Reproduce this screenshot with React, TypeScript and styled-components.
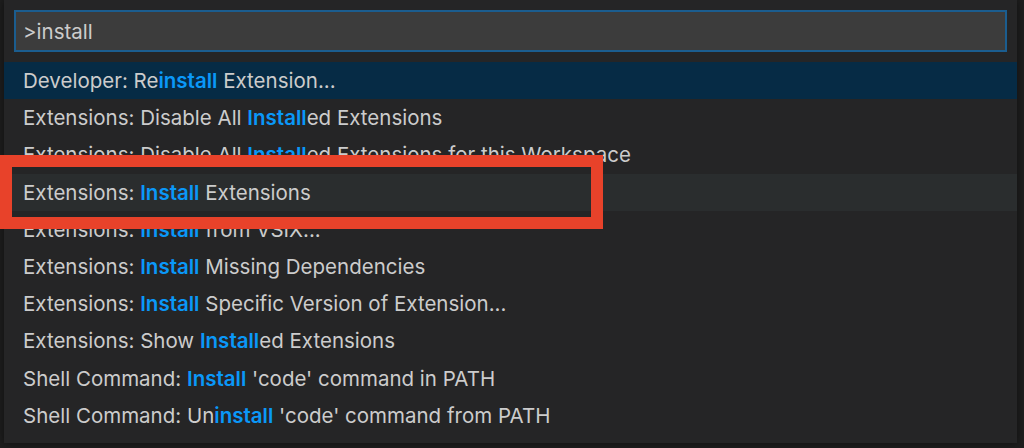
import React from "react";
import styled, { createGlobalStyle } from "styled-components";

const Global = createGlobalStyle`
  html, body { margin: 0; padding: 0; background: #1e1e1e; }
  body { width: 1024px; height: 448px; overflow: hidden; font-family: Inter, "Noto Sans", sans-serif; }
`;

const Page = styled.div`
  position: relative;
  display: flex;
  width: 1024px;
  height: 448px;
  padding-left: 4px;
  box-sizing: border-box;
  background: #1e1e1e;
`;

const Panel = styled.div`
  width: 1013px;
  height: 443px;
  box-sizing: border-box;
  background: #252526;
  padding: 10px 0 8px;
  display: flex;
  flex-direction: column;
  box-shadow: 0 0 8px rgba(0, 0, 0, 0.5);
`;

const InputBox = styled.div`
  margin: 0 10px;
  height: 42px;
  box-sizing: border-box;
  border: 2px solid #1b5d8f;
  background: #3c3c3c;
  display: flex;
  align-items: center;
  padding-left: 7px;
  color: #cccccc;
  font-size: 20.5px;
`;

const List = styled.div`
  margin-top: 10px;
  display: flex;
  flex-direction: column;
`;

const Row = styled.div<{ $state?: "selected" | "hover" }>`
  height: 37.2px;
  display: flex;
  align-items: center;
  padding-left: 19px;
  background: ${(p) =>
    p.$state === "selected" ? "#062b45" : p.$state === "hover" ? "#2a2d2e" : "transparent"};
`;

const Label = styled.span`
  color: #cccccc;
  font-size: 20.5px;
  white-space: pre;
`;

const Hl = styled.span`
  color: #0a98f8;
  font-weight: 600;
`;

const Annotation = styled.div`
  position: absolute;
  left: 0;
  top: 155px;
  width: 603px;
  height: 74px;
  box-sizing: border-box;
  border: 12px solid #e8422a;
  pointer-events: none;
`;

type Item = { parts: [string, string, string]; state?: "selected" | "hover" };

const items: Item[] = [
  { parts: ["Developer: Re", "install", " Extension..."], state: "selected" },
  { parts: ["Extensions: Disable All ", "Install", "ed Extensions"] },
  { parts: ["Extensions: Disable All ", "Install", "ed Extensions for this Workspace"] },
  { parts: ["Extensions: ", "Install", " Extensions"], state: "hover" },
  { parts: ["Extensions: ", "Install", " from VSIX..."] },
  { parts: ["Extensions: ", "Install", " Missing Dependencies"] },
  { parts: ["Extensions: ", "Install", " Specific Version of Extension..."] },
  { parts: ["Extensions: Show ", "Install", "ed Extensions"] },
  { parts: ["Shell Command: ", "Install", " 'code' command in PATH"] },
  { parts: ["Shell Command: Un", "install", " 'code' command from PATH"] },
];

export default function App() {
  return (
    <Page>
      <Global />
      <Panel>
        <InputBox>&gt;install</InputBox>
        <List>
          {items.map((it, i) => (
            <Row key={i} $state={it.state}>
              <Label>
                {it.parts[0]}
                <Hl>{it.parts[1]}</Hl>
                {it.parts[2]}
              </Label>
            </Row>
          ))}
        </List>
      </Panel>
      <Annotation />
    </Page>
  );
}
